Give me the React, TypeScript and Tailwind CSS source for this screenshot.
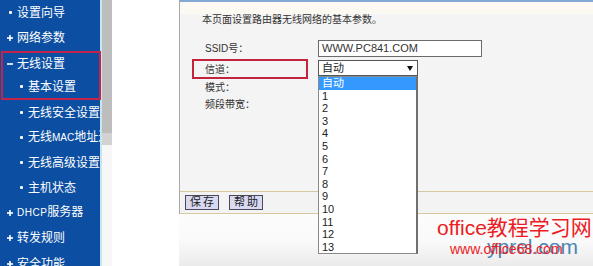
const FONT = "font-['Liberation_Sans','Noto_Sans_CJK_SC',sans-serif]";

function Dot() {
  return <span className="block w-[3px] h-[3px] bg-white rounded-[1px]" />;
}
function Plus() {
  return (
    <svg width="6" height="6" viewBox="0 0 6 6">
      <rect x="0" y="2.2" width="6" height="1.6" fill="#fff" />
      <rect x="2.2" y="0" width="1.6" height="6" fill="#fff" />
    </svg>
  );
}
function Minus() {
  return (
    <svg width="6" height="6" viewBox="0 0 6 6">
      <rect x="0" y="2.2" width="6" height="1.6" fill="#fff" />
    </svg>
  );
}

function Item({ icon, label, sub, h = "h-[25px]", pl }: { icon: "dot" | "plus" | "minus"; label: React.ReactNode; sub?: boolean; h?: string; pl?: string }) {
  return (
    <div className={`${h} shrink-0 flex items-center whitespace-nowrap overflow-hidden ${pl ?? (sub ? "pl-[16px]" : "pl-[5px]")}`}>
      <span className="w-[10px] flex justify-center items-center shrink-0">
        {icon === "dot" ? <Dot /> : icon === "plus" ? <Plus /> : <Minus />}
      </span>
      <span className="ml-[2px] text-white text-[12px] leading-[14px]">{label}</span>
    </div>
  );
}

function Sidebar() {
  return (
    <div className="w-[100px] shrink-0 bg-[#0b4ea2] flex flex-col relative z-10">
      <Item icon="dot" label="设置向导" />
      <Item icon="plus" label="网络参数" />
      <div className="shrink-0 ml-[1px] mt-[1px] w-[100px] h-[49px] border-2 border-[#c4234a] flex flex-col">
        <Item icon="minus" label="无线设置" h="h-[22px]" pl="pl-[2px]" />
        <Item icon="dot" label="基本设置" h="h-[23px]" pl="pl-[13px]" />
      </div>
      <Item icon="dot" sub label="无线安全设置" />
      <Item icon="dot" sub label={<span>无线<span className="text-[10px]">MAC</span>地址过滤</span>} />
      <Item icon="dot" sub label="无线高级设置" />
      <Item icon="dot" sub label="主机状态" />
      <Item icon="plus" label={<span><span className="text-[10px] tracking-[0.5px]">DHCP</span>服务器</span>} />
      <Item icon="plus" label="转发规则" h="h-[26px]" />
      <Item icon="plus" label="安全功能" />
    </div>
  );
}

function Panel() {
  const opts = ["1", "2", "3", "4", "5", "6", "7", "8", "9", "10", "11", "12", "13"];
  return (
    <div className="w-[414px] shrink-0 flex flex-col">
      <div className="h-[214px] shrink-0 border-l border-[#a9a9a9] border-t-2 border-t-[#86a8d6] flex flex-col">
        <div className="h-[12px] shrink-0 bg-[#fbf9f1]" />
        <div className="flex-1 bg-[#f4f4f4] flex flex-col">
          <div className="pl-[22px] text-[10px] leading-[12px] text-[#333]">本页面设置路由器无线网络的基本参数。</div>
          <div className="mt-[13px] h-[19px] flex items-center pl-[12px]">
            <div className="w-[116px] h-[19px] border-2 border-transparent pl-[11px] flex items-center text-[10px] text-[#333]">SSID号：</div>
            <div className="ml-[10px] w-[164px] h-[17px] bg-white border border-[#6b6b6b] flex items-center pl-[3px] text-[11px] text-[#333]">WWW.PC841.COM</div>
          </div>
          <div className="mt-[1px] h-[20px] flex items-start pl-[12px]">
            <div className="w-[116px] h-[20px] border-2 border-[#c4233e] pl-[11px] flex items-center text-[10px] text-[#333]">信道：</div>
            <div className="ml-[10px] mt-[1px] w-[100px] h-[16px] relative z-20">
              <div className="w-full h-full bg-white border border-[#555] flex items-center justify-between pl-[3px] pr-[4px] text-[11px] text-[#222]">
                <span>自动</span>
                <svg width="6" height="5" viewBox="0 0 6 5"><path d="M0 0H6L3 5Z" fill="#111" /></svg>
              </div>
              <div className="absolute left-0 top-full w-[100px] bg-white border border-[#8a8a8a] border-r-2 border-r-[#707070] text-[11px] leading-[12.6px] text-[#222]">
                <div className="bg-[#3399ff] text-white pl-[3px]">自动</div>
                {opts.map((o) => (
                  <div key={o} className="pl-[3px]">{o}</div>
                ))}
              </div>
            </div>
          </div>
          <div className="h-[16px] flex items-center pl-[25px] text-[10px] text-[#333]">模式：</div>
          <div className="h-[18px] flex items-center pl-[25px] text-[10px] text-[#333]">频段带宽：</div>
        </div>
        <div className="h-[23px] shrink-0 border-t border-b border-[#d8c8a0] bg-[#f3f3f3] flex items-center pl-[5px] gap-[10px]">
          <button className="w-[34px] h-[15px] bg-[#d9d9f2] border border-[#4a4a5a] text-[11px] leading-[13px] tracking-[2px] text-[#222] flex items-center justify-center pl-[2px]">保存</button>
          <button className="w-[34px] h-[15px] bg-[#d9d9f2] border border-[#4a4a5a] text-[11px] leading-[13px] tracking-[2px] text-[#222] flex items-center justify-center pl-[2px]">帮助</button>
        </div>
      </div>
      <div className="flex-1 bg-gradient-to-b from-[#fcfcfc] via-[#fafafa] to-[#ebebeb]" />
    </div>
  );
}

export default function App() {
  return (
    <div className={`w-[593px] h-[266px] overflow-hidden flex bg-white relative ${FONT}`}>
      <Sidebar />
      <div className="w-[2px] shrink-0 bg-[#c6e6f3]" />
      <div className="w-[10px] shrink-0 flex flex-col">
        <div className="h-[133px] shrink-0 bg-[#bdbdbd]" />
        <div className="h-[12px] shrink-0 bg-[#d2d2d2]" />
        <div className="flex-1 bg-[#f7f7f7]" />
      </div>
      <div className="w-[67px] shrink-0 bg-white" />
      <Panel />
      <div className="absolute left-[487px] top-[236px] text-[21px] leading-[21px] text-[#4a86b2] whitespace-nowrap">yprel.com</div>
      <div className="absolute left-[437px] top-[217px] text-[21px] leading-[21px] text-[#ec1c24] whitespace-nowrap">office教程学习网</div>
      <div className="absolute left-[450px] top-[242px] text-[14px] leading-[14px] text-[#ec1c24] whitespace-nowrap">www.office68.com</div>
    </div>
  );
}
